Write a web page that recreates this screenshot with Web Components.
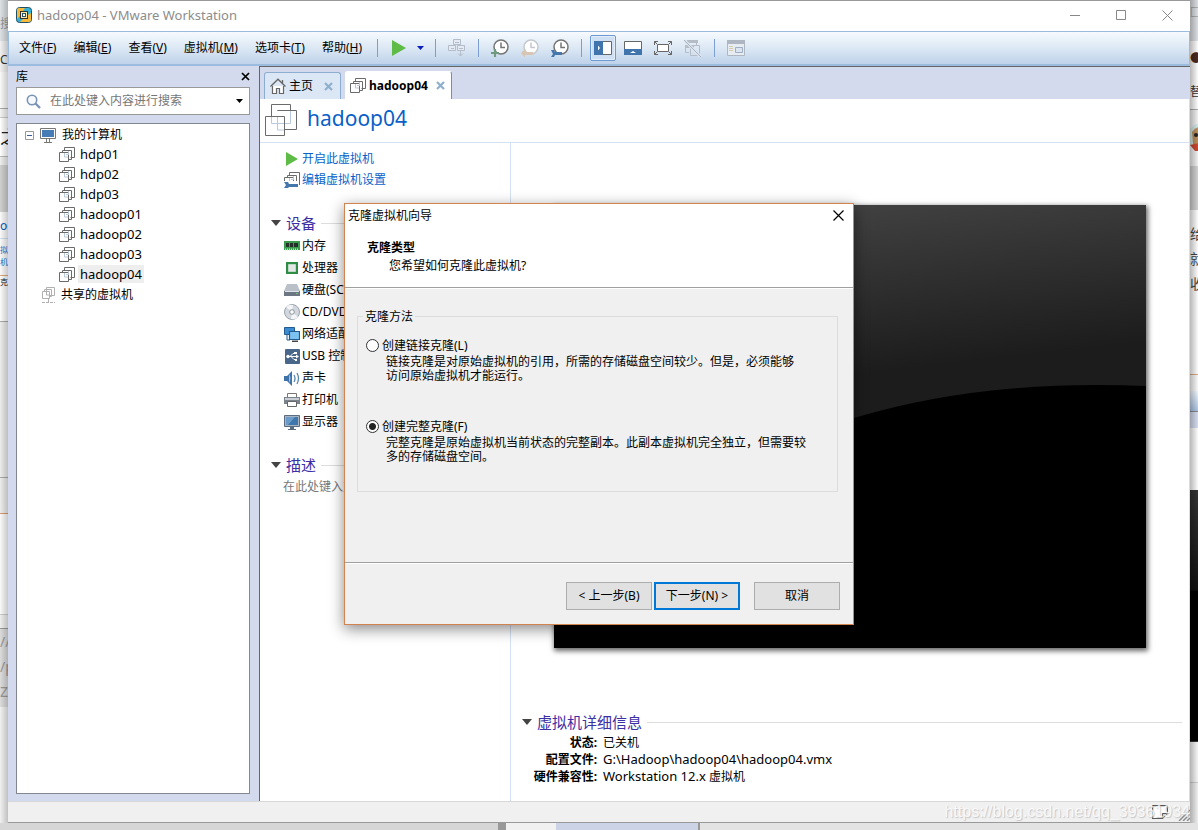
<!DOCTYPE html>
<html lang="zh-CN">
<head>
<meta charset="utf-8">
<title>hadoop04 - VMware Workstation</title>
<style>
html,body{margin:0;height:100%}
body{font:12px/20px "Noto Sans","Noto Sans CJK SC",sans-serif;color:#000;overflow:hidden}
</style>
</head>
<body>
<desk-top>
  <desk-edge slot="left" class="l">
    <desk-block style="--h:41px;--b:#dde1e4;--c:#999;--p:14px">搜</desk-block>
    <desk-block style="--h:31px;--b:#f1f1f1;--c:#333;--p:9px">CS</desk-block>
    <desk-block style="--h:37px;--b:#fafafa;--e:#aaa"></desk-block>
    <desk-block style="--h:9px;--b:#f4f4f4;--e:#ccc"></desk-block>
    <desk-block style="--h:39px;--b:#fff;--c:#222;--e:#bbb;--p:9px;--s:18px">之</desk-block>
    <desk-block style="--h:8px;--b:#eee"></desk-block>
    <desk-block style="--h:47px;--b:#d0d0d0"></desk-block>
    <desk-block style="--h:27px;--b:#fafafa;--c:#0a58c4;--e:#cfe0f0;--p:4px">oc</desk-block>
    <desk-block style="--h:37px;--b:#fafafa;--c:#2a74cc;--e:#e0a878;--l:12px;--s:8px;--p:5px">拟机<br>机设</desk-block>
    <desk-block style="--h:46px;--b:#fcfcfc;--c:#222;--e:#aaa;--s:8px;--l:12px">克隆</desk-block>
    <desk-block style="--h:156px;--b:#ededed;--e:#aaa"></desk-block>
    <desk-block style="--h:36px;--b:#ededed;--e:#d99a6c"></desk-block>
    <desk-block style="--h:101px;--b:#fafafa;--e:#ccc"></desk-block>
    <desk-block style="--h:14px;--b:#eee;--e:#999"></desk-block>
    <desk-block style="--h:78px;--b:#dcdcdc;--c:#999;--l:25px;--s:14px">//<br>/p<br>Z</desk-block>
    <desk-block class="fill" style="--b:#f1f1f1"></desk-block>
  </desk-edge>
  <vm-window></vm-window>
  <desk-edge slot="right" class="r">
    <desk-block style="--h:41px;--b:#dadde1;--c:#888;--p:3px">□</desk-block>
    <desk-block style="--h:41px;--b:#fafafa;--c:#4a2a22;--p:8px">●</desk-block>
    <desk-block style="--h:28px;--b:#fafafa;--c:#333;--e:#aaa">替.</desk-block>
    <desk-block style="--h:56px;--b:#eee;--p:12px"><vm-icon name="dog"></vm-icon></desk-block>
    <desk-block style="--h:44px;--b:#cfcfcf"></desk-block>
    <desk-block style="--h:165px;--b:#fafafa;--c:#444;--p:11px;--l:25px;--s:14px;--e:#dba67c">给<br>就<br>收</desk-block>
    <desk-block style="--h:16px;--b:#f7f7f7"></desk-block>
    <desk-block style="--h:21px;--b:linear-gradient(#eef4fb,#a9c2e2);--e:#888"></desk-block>
    <desk-block style="--h:16px;--b:#d4daee"></desk-block>
    <desk-block style="--h:62px;--b:#fafafa"></desk-block>
    <desk-block style="--h:252px;--b:linear-gradient(#333,#111 100px,#000 101px)"></desk-block>
    <desk-block style="--h:41px;--b:#f4f4f4;--e:#ccc"></desk-block>
    <desk-block class="fill" style="--b:#eee"></desk-block>
  </desk-edge>
</desk-top>

<script>
/* Icon set: name -> [width, height, markup] */
const VM = () => `<g fill="none" stroke="#6b6b6b"><path fill="#fff" d="M5.500 .5h10v10h-10z"/><path fill="#fff" d="M3.500 3.500h8v8h-8z" stroke="none"/><path d="M.5 5.500h9v9h-9z" fill="#fff"/><path d="M3.500 5V3.500h9v9H10"/><path stroke="#b9c8dd" d="M5.500 6v4H9M7 7.500h3M9.500 4v3"/></g>`;
const CLOCK = c => `<circle cx="11" cy="8" r="7" fill="#fff" stroke="${c}" stroke-width="1.500"/><path d="M11 3.500V8.500h4" fill="none" stroke="${c}" stroke-width="1.500"/>`;
const ICONS = {
  app:[16,16,`<rect x=".5" y=".5" width="15" height="15" rx="3" fill="#35b1d8" stroke="#1f4f63"/><path d="M3 1h6L7 4H4v5l-3 3V3q0-2 2-2zM15 6v7q0 2-2 2H4l3-3h5V8z" fill="#f6b93a"/><rect x="4.500" y="4.500" width="7" height="7" fill="#ffe9a3" stroke="#333"/><rect x="6.500" y="6.500" width="3" height="3" fill="#fff" stroke="#26536a"/>`],
  min:[11,11,`<path d="M0 5.500h10" stroke="#888"/>`],
  max:[11,11,`<path d="M.5 .5h9v9h-9z" fill="none" stroke="#888"/>`],
  close:[11,11,`<path d="M.5 .5l10 10M10.500 .5l-10 10" stroke="#888"/>`],
  dclose:[11,11,`<path d="M.5 .5l10 10M10.500 .5l-10 10" stroke="#000" stroke-width="1.200"/>`],
  pclose:[9,9,`<path d="M1 1l7 7M8 1l-7 7" stroke="#000" stroke-width="1.700"/>`],
  tclose:[9,9,`<path d="M1 1l7 7M8 1l-7 7" stroke="#8fb0cd" stroke-width="2.200"/>`],
  play:[14,16,`<path d="M0 0l14 8-14 8z" fill="#5dbb46"/>`],
  run:[12,14,`<path d="M0 0l12 7-12 7z" fill="#5dbb46"/>`],
  caret:[7,4,`<path d="M0 0h7L3.500 4z" fill="#0c1fbc"/>`],
  drop:[7,4,`<path d="M0 0h7L3.500 4z" fill="#000"/>`],
  tri:[10,6,`<path d="M0 0h10L5 6z" fill="#444"/>`],
  send:[18,18,`<g fill="#e4ebf4" stroke="#b3bcc8"><path d="M5.500 .5h7v5h-7zM.5 6.500h7v5h-7zM9.500 6.500h7v5h-7zM7 3.500h4M3 9.500h3M11 9.500h4"/><path fill="none" d="M12.500 11v6M10 14.500l2.500 2.500 2.500-2.500"/></g>`],
  snap:[20,18,CLOCK('#747474')+`<path d="M5 10v8M1 14h8" stroke="#719b7d" stroke-width="2.200"/>`],
  revert:[20,18,CLOCK('#c3c8ce')+`<path d="M1 14l4-4v3h8v3H5v3z" fill="#d8c5b4"/>`],
  manage:[20,18,CLOCK('#747474')+`<path d="M1 11h3l1 2h7v3H5l-1 2H1l2-3z" fill="#4577ac"/>`],
  side:[18,14,`<path fill="#fff" stroke="#666" d="M.5 .5h17v13H.5z"/><path fill="#3f74ac" d="M0 0h9v14H0z"/><path d="M4 4.500L6 7 4 9.500z" fill="#fff"/>`],
  thumb:[18,14,`<path fill="#fff" stroke="#666" d="M.5 .5h17v13H.5z"/><path fill="#3f74ac" d="M0 8h18v6H0z"/><path d="M6 12l3-2 3 2z" fill="#fff"/>`],
  full:[18,14,`<path fill="#fff" stroke="#666" d="M3.500 3.500h11v7h-11z"/><path fill="none" stroke="#666" d="M.5 4V.5H4M.5 .5L3 3M14 .5h3.500V4M17.500 .5L15 3M.5 10v3.500H4M.5 13.500L3 11M14 13.500h3.500V10M17.500 13.500L15 11"/>`],
  unity:[18,17,`<path fill="#b5bcc6" d="M3 0h11v3H3zM1 5h9v3H1z"/><g fill="none" stroke="#b5bcc6"><path d="M12.500 3v3M1.500 8v4.500H5M6.500 5.500h9v10h-9z"/></g><path d="M0 0l17 17" stroke="#dbe5f1" stroke-width="3"/><path d="M0 0l17 17" stroke="#a9b1bc"/>`],
  console:[18,16,`<path fill="#e7ecf2" stroke="#aeb6c1" d="M.5 .5h17v15H.5z"/><path fill="#aeb6c1" d="M0 0h18v4H0z"/><path fill="#dce5ef" stroke="#9dafc4" d="M8.500 7.500h7v5h-7z"/><path stroke="#d5ccaa" d="M2 6.500h4M2 8.500h4M2 10.500h4"/>`],
  search:[15,15,`<circle cx="6" cy="6" r="4.700" fill="#f6fafe" stroke="#7892b8" stroke-width="1.600"/><path d="M9.500 9.500l4.500 4.500" stroke="#7892b8" stroke-width="2.300"/>`],
  minus:[9,9,`<path fill="#fff" stroke="#999" d="M.5 .5h8v8h-8z"/><path stroke="#3a5c9a" d="M2 4.500h5"/>`],
  pc:[16,15,`<path fill="#fff" stroke="#777" d="M.5 .5h15v10H.5z"/><path fill="#477db7" d="M2 2h12v7H2z"/><path d="M6.500 11v3M9.500 11v3M4 14.500h8" stroke="#777"/>`],
  vm:[16,16,VM()],
  shared:[13,17,`<g fill="#fff" stroke="#b0b0b0"><path d="M4.500 .5h8v8h-8z"/><path d="M.5 4.500h7v7h-7z"/><path fill="none" d="M2.500 4V2.500h7v7H8M4.500 5v3H8M6.500 12v3"/><path stroke-dasharray="3 1" d="M0 15.500h13"/></g>`],
  vmbig:[32,32,`<g fill="#fff" stroke="#6b6b6b"><path d="M6.500 .5h19v19h-19z"/><path d="M12.500 6.500h19v19h-19z"/><path stroke="none" d="M12 7h13v12H12z"/><path d="M.5 12.500h19v19H.5z"/><path fill="none" stroke="#b9c8dd" d="M25.500 7v12.500H20M6.500 13v6.500H12M12.500 13v13H19M12.500 19.500H19"/></g>`],
  edit:[16,16,VM()+`<path fill="#fff" d="M0 9h16v7H0z"/><path fill="#4577ac" d="M0 10h4l1 2h9v3H5l-1 1H0l2-3z"/><path d="M15.500 7v6" stroke="#6b6b6b" fill="none"/>`],
  home:[16,16,`<path fill="#fff" stroke="#666" stroke-width="1.200" d="M2.500 8v7.500h4v-5h3v5h4V8"/><path fill="none" stroke="#666" stroke-width="1.300" d="M.5 8.500L8 1.200l7.500 7.300M12.500 5V2"/>`],
  mem:[16,10,`<path fill="#3a9a4d" d="M0 0h16v9H0z"/><path fill="#25302a" d="M2 2h3v4H2zM6 2h3v4H6zM10 2h4v4h-4z"/><path stroke="#e8dc8a" stroke-dasharray="1 1" d="M1 8.500h14" stroke-width="2"/>`],
  cpu:[12,12,`<path fill="#2f8d46" d="M0 0h12v12H0z"/><path fill="#e4e7e6" stroke="#bfd9c5" d="M2.500 2.500h7v7h-7z"/>`],
  disk:[16,12,`<path fill="#b9c0c8" d="M3 0h10l3 7H0z"/><path fill="#6c7783" d="M0 7h16v5H0z"/><path stroke="#dfe5ea" d="M1 7.500h14"/><path fill="#6fc57a" d="M12 9h2v1h-2z"/>`],
  cd:[16,16,`<circle cx="8" cy="8" r="7.500" fill="#d2d7dd" stroke="#9aa3ad"/><path fill="#f3f5f7" d="M8 8L2 3q3-3 7-2zM8 8l6 5q-3 3-7 2z"/><circle cx="8" cy="8" r="2.300" fill="#fff" stroke="#8c949e"/>`],
  net:[16,15,`<path fill="#3b8bd0" stroke="#225b91" d="M.5 .5h10v7H.5z"/><path fill="none" stroke="#225b91" d="M3 8v5h3"/><path fill="#7dc3f2" stroke="#225b91" stroke-width="1.200" d="M5.500 4.500h10v8h-10z"/><path stroke="#444" stroke-width="1.500" d="M8 14.300h6"/>`],
  usb:[15,15,`<rect width="15" height="15" rx="1" fill="#49678b"/><path fill="none" stroke="#fff" d="M2 7.500h10M5 7.500l3-3h2M6 7.500l3 3h2"/><circle cx="3" cy="7.500" r="1.700" fill="#fff"/><path fill="#fff" d="M9 3h3v2H9zM10 10h2v2h-2zM11 5.500l3 2-3 2z"/>`],
  snd:[16,15,`<path fill="#3e72a8" d="M0 5h3l5-5v15l-5-5H0z"/><path fill="#9cc4e8" d="M5 3q3 4 0 9z"/><path fill="none" stroke="#5b86b2" stroke-width="1.300" d="M10 4q2 3.500 0 7M13 2q3 5.500 0 11"/>`],
  prn:[16,14,`<path fill="#fff" stroke="#777" d="M3.500 .5h9v5h-9z"/><path fill="#7b838c" d="M0 4h16v7H0z"/><path fill="#c9ced4" d="M1 5h14v2H1z"/><path fill="#fff" stroke="#666" d="M3.500 8.500h9v5h-9z"/>`],
  disp:[16,15,`<path fill="#a8b4c1" stroke="#5b6c80" d="M.5 .5h15v11H.5z"/><path fill="#3f76ac" d="M2 2h12v8H2z"/><path fill="#6b9bc9" d="M2 2h9L4 10H2z"/><path fill="#5b6c80" d="M6 12h4v2H6zM4 14h8v1H4z"/>`],
  note:[16,14,`<path fill="#fff" stroke="#555" stroke-width="1.200" d="M.6 .6h14.800v7.900l-5 5H.6z"/><path fill="#ccc" stroke="#555" d="M10.400 13.500v-5h5"/>`],
  grip:[12,12,`<path d="M1 12L12 1M5 12l7-7M9 12l3-3" stroke="#8b8b8b" stroke-width="1.500"/>`],
  dog:[20,30,`<circle cx="12" cy="15" r="14" fill="#cfe6e4"/><path fill="#b98d5c" d="M2 10q5-7 12-4v16H3z"/><circle cx="6" cy="13" r="2" fill="#222"/><path fill="#c9472f" d="M0 23q8-3 16 0v6H5z"/>`]
};

function define(name, markup, after) {
  const t = document.createElement('template');
  t.innerHTML = markup;
  customElements.define(name, class extends HTMLElement {
    constructor() { super(); this.attachShadow({mode: 'open'}).append(t.content.cloneNode(true)); }
    connectedCallback() { if (after) after(this, this.shadowRoot); }
  });
}

customElements.define('vm-icon', class extends HTMLElement {
  constructor() { super(); this.attachShadow({mode: 'open'}); }
  connectedCallback() {
    const [w, h, m] = ICONS[this.getAttribute('name')];
    this.shadowRoot.innerHTML = `<style>:host{display:inline-flex;flex:none}svg{display:block}</style><svg width="${w}" height="${h}" viewBox="0 0 ${w} ${h}" aria-hidden="true">${m}</svg>`;
  }
});

function icon(name) {
  const i = document.createElement('vm-icon');
  i.setAttribute('name', name);
  return i;
}

define('desk-block', `<style>
:host{display:block;flex:none;box-sizing:border-box;height:var(--h);overflow:hidden;white-space:nowrap;background:var(--b);color:var(--c);border-bottom:1px solid var(--e,transparent);padding-top:var(--p,0);font-size:var(--s,12px);line-height:var(--l,20px)}
:host(.fill){flex:1 0 0;height:auto}</style><slot></slot>`);

define('desk-edge', `<style>
:host{display:flex;flex-direction:column;min-width:0;overflow:hidden;position:relative}
:host::after{content:"";position:absolute;inset:0}
:host(.l)::after{background:linear-gradient(90deg,transparent,#0003)}
:host(.r)::after{background:linear-gradient(270deg,transparent,#0004)}</style><slot></slot>`);

define('desk-top', `<style>
:host{display:grid;grid-template:1fr 7px/8px 1fr 8px;height:100vh}
.main{min-width:0;display:grid}
.bottom{grid-column:1/-1;display:flex;background:#d6d6d6}
.bottom i{flex:none;height:7px}
.a{width:498px}.b{width:8px;background:#999}.c{width:50px;background:#f1f1f1}.d{width:142px;background:#ccd3e6;border-right:2px solid #999}.bottom .e{flex:1;background:#e3e3e3}
</style><slot name="left"></slot><div class="main"><slot></slot></div><slot name="right"></slot>
<div class="bottom"><i class="a"></i><i class="b"></i><i class="c"></i><i class="d"></i><i class="e"></i></div>`);

define('title-bar', `<style>
:host{display:flex;align-items:center;height:30px;box-sizing:border-box;padding:0 17px 2px 8px;background:#fff;color:#8c8c8c;font-size:13px}
span{margin-left:5px;flex:1}
button{border:0;background:none;padding:0;display:flex;margin-left:35px}
</style><vm-icon name="app"></vm-icon><span>hadoop04 - VMware Workstation</span>
<button aria-label="最小化"><vm-icon name="min"></vm-icon></button><button aria-label="最大化"><vm-icon name="max"></vm-icon></button><button aria-label="关闭"><vm-icon name="close"></vm-icon></button>`);

define('menu-item', `<style>:host{display:block}button{font:inherit;line-height:20px;border:0;background:none;padding:0;color:#000;white-space:nowrap}</style>
<button><slot></slot>(<u></u>)</button>`, (el, r) => r.querySelector('u').textContent = el.getAttribute('key'));

define('tool-button', `<style>:host{display:flex}
button{display:grid;place-items:center;width:26px;height:26px;box-sizing:border-box;border:1px solid transparent;border-radius:2px;background:none;padding:0}
:host(.on) button{background:#cfe0f5;border-color:#6d9ad2;box-shadow:inset 0 0 0 1px #e4eefb}
:host(.slim) button{width:14px}
</style><button></button>`, (el, r) => {
  const b = r.querySelector('button');
  b.replaceChildren(icon(el.getAttribute('icon')));
  b.setAttribute('aria-label', el.getAttribute('label'));
});

define('tool-bar', `<style>
:host{display:flex;align-items:center;border:1px solid #9cbcdf;border-bottom-width:2px;box-sizing:border-box;height:35px;background:linear-gradient(#f7fafe,#dce8f4 50%,#bfd2ea);padding-left:10px}
.menus{display:flex;gap:17px;margin-right:15px}
i{width:1px;height:18px;background:#7c9fd0;flex:none}
div.g{display:flex;align-items:center;gap:4px;padding:0 8px}
div.p{gap:1px}
</style>
<div class="menus"><menu-item key="F">文件</menu-item><menu-item key="E">编辑</menu-item><menu-item key="V">查看</menu-item><menu-item key="M">虚拟机</menu-item><menu-item key="T">选项卡</menu-item><menu-item key="H">帮助</menu-item></div>
<i></i><div class="g p"><tool-button icon="play" label="开机"></tool-button><tool-button class="slim" icon="caret" label="电源选项"></tool-button></div>
<i></i><div class="g"><tool-button icon="send" label="发送"></tool-button></div>
<i></i><div class="g"><tool-button icon="snap" label="拍摄快照"></tool-button><tool-button icon="revert" label="恢复快照"></tool-button><tool-button icon="manage" label="管理快照"></tool-button></div>
<i></i><div class="g"><tool-button class="on" icon="side" label="显示库"></tool-button><tool-button icon="thumb" label="缩略图"></tool-button><tool-button icon="full" label="全屏"></tool-button><tool-button icon="unity" label="Unity"></tool-button></div>
<i></i><div class="g"><tool-button icon="console" label="控制台"></tool-button></div>`);

define('tree-item', `<style>
:host{display:flex;align-items:center;height:20px;padding-left:42px;gap:3px}
:host(.root){padding-left:8px;gap:4px}:host(.shared){padding-left:25px;gap:4px}
span{padding:0 2px;font-size:13px;line-height:18px;margin-bottom:2px}
:host(.root) span,:host(.shared) span{font-size:12px;margin:0}
:host(.root) vm-icon+vm-icon{margin-left:2px}
:host(.sel) span{background:#eee}
</style><span><slot></slot></span>`, (el, r) => {
  (el.getAttribute('icon') || 'vm').split(' ').forEach(n => r.querySelector('span').before(icon(n)));
});

define('library-pane', `<style>
:host{display:flex;flex-direction:column;background:#d4daee;padding:0 9px 7px 8px;width:251px;box-sizing:border-box}
header{display:flex;justify-content:space-between;align-items:center;height:21px}
button{border:0;background:none;padding:0;display:flex}
.search{display:flex;align-items:center;height:28px;box-sizing:border-box;border:1px solid #999;background:#fff;padding:0 6px 0 9px}
input{flex:1;min-width:0;border:0;padding:0;margin-left:9px;font:inherit;outline:0}
input::placeholder{color:#767676;opacity:1}
.tree{flex:1;margin-top:8px;border:1px solid #828790;background:#fff;padding-top:1px}
</style><header><span>库</span><button aria-label="关闭库"><vm-icon name="pclose"></vm-icon></button></header>
<div class="search"><vm-icon name="search"></vm-icon><input aria-label="搜索" placeholder="在此处键入内容进行搜索"><button aria-label="搜索选项"><vm-icon name="drop"></vm-icon></button></div>
<div class="tree"><tree-item class="root" icon="minus pc">我的计算机</tree-item><tree-item>hdp01</tree-item><tree-item>hdp02</tree-item><tree-item>hdp03</tree-item><tree-item>hadoop01</tree-item><tree-item>hadoop02</tree-item><tree-item>hadoop03</tree-item><tree-item class="sel">hadoop04</tree-item><tree-item class="shared" icon="shared">共享的虚拟机</tree-item></div>`);

define('tab-strip', `<style>
:host{display:flex;align-items:flex-end;gap:4px;height:32px;padding-left:4px;background:#d4daee}
.tab{display:flex;align-items:center;box-sizing:border-box;height:27px;border:1px solid #8cadd0;border-bottom:0;border-radius:3px 3px 0 0;background:#dbe7f5;padding:0 7px 0 5px}
.on{height:28px;background:#fff;border-color:#fff #6d8fb8 #fff #fff;font-weight:bold;padding:0 6px 0 4px}
button{border:0;background:none;padding:0;display:flex;align-items:center;font:inherit;line-height:20px;color:#000;gap:3px}
.x{margin-left:11px}.on .x{margin-left:8px}
</style><div class="tab"><button><vm-icon name="home"></vm-icon>主页</button><button class="x" aria-label="关闭主页"><vm-icon name="tclose"></vm-icon></button></div>
<div class="tab on"><button><vm-icon name="vm"></vm-icon>hadoop04</button><button class="x" aria-label="关闭 hadoop04"><vm-icon name="tclose"></vm-icon></button></div>`);

define('section-head', `<style>
:host{display:flex;align-items:center;gap:5px;color:#3d2fa5;font-size:15px;line-height:22px;margin-bottom:1px}
h2{font:inherit;margin:0}i{flex:1;height:1px;background:#ddd}
</style><vm-icon name="tri"></vm-icon><h2><slot></slot></h2><i></i>`);

define('device-row', `<style>
:host{display:flex;align-items:center;height:22px;white-space:nowrap}
span{width:16px;display:flex;justify-content:center;margin-right:2px;flex:none}a{color:#000;text-decoration:none}
:host(.cmd) a{color:#0a62c9}:host(.cmd){height:21px}
</style><span></span><a href="#"><slot></slot></a>`, (el, r) => r.querySelector('span').replaceChildren(icon(el.getAttribute('icon'))));

define('side-column', `<style>
:host{display:block;width:251px;box-sizing:border-box;border-right:1px solid #d5e1f2;padding:5px 0 0 11px}
.rows{padding-left:13px}
section-head{margin-top:22px}.d{margin-top:21px}
p{margin:0;padding-left:12px;color:#777}
</style><div class="rows"><device-row class="cmd" icon="run">开启此虚拟机</device-row><device-row class="cmd" icon="edit">编辑虚拟机设置</device-row></div>
<section-head>设备</section-head>
<div class="rows"><device-row icon="mem">内存</device-row><device-row icon="cpu">处理器</device-row><device-row icon="disk">硬盘(SCSI)</device-row><device-row icon="cd">CD/DVD (IDE)</device-row><device-row icon="net">网络适配器</device-row><device-row icon="usb">USB 控制器</device-row><device-row icon="snd">声卡</device-row><device-row icon="prn">打印机</device-row><device-row icon="disp">显示器</device-row></div>
<section-head class="d">描述</section-head><p>在此处键入对该虚拟机的描述。</p>`);

define('vm-summary', `<style>
:host{display:flex;flex-direction:column;flex:1;min-width:0;padding:62px 8px 16px 11px}
.screen{margin:0 36px 0 32px;box-shadow:1px 2px 5px 1px #0009}
svg{display:block;width:100%}
section-head{margin-top:auto}
dl{margin:0;display:grid;grid-template-columns:75px 1fr;column-gap:6px;line-height:17px}
dt{font-weight:bold;text-align:right;white-space:nowrap}dd{margin:0}.w{font-size:13px}
</style><div class="screen"><svg viewBox="0 0 592 443" role="img" aria-label="虚拟机屏幕"><defs><linearGradient id="g" x1="0" y1="0" x2=".15" y2="1"><stop offset="0" stop-color="#484848"/><stop offset=".45" stop-color="#1c1c1c"/></linearGradient></defs><path fill="url(#g)" d="M0 0h592v443H0z"/><path d="M0 443V330L300 213Q430 174 592 181V443z"/></svg></div>
<section-head>虚拟机详细信息</section-head>
<dl><dt>状态:</dt><dd>已关机</dd><dt>配置文件:</dt><dd class="w">G:\\Hadoop\\hadoop04\\hadoop04.vmx</dd><dt>硬件兼容性:</dt><dd><span class="w">Workstation 12.x</span> 虚拟机</dd></dl>`);

define('vm-view', `<style>
:host{display:flex;flex-direction:column;min-width:0;background:#fff;border:solid #666;border-width:1px 0 0 1px;box-shadow:inset -1px 0 #ddd}
header{display:flex;align-items:center;gap:10px;height:43px;padding-left:5px;border-bottom:1px solid #d3e1f3;font-size:21px;color:#0a5fc8}
h1{font:inherit;line-height:30px;margin:0 0 5px}
header vm-icon{margin-bottom:2px}
main{display:flex;flex:1}
</style><tab-strip></tab-strip><header><vm-icon name="vmbig"></vm-icon><h1>hadoop04</h1></header>
<main><side-column></side-column><vm-summary></vm-summary></main>`);

define('status-bar', `<style>
:host{display:flex;justify-content:flex-end;align-items:center;height:21px;background:#f0f0f0;border-top:1px solid #d8d8d8;position:relative;box-sizing:border-box}
vm-icon{margin-right:10px}vm-icon+vm-icon{margin:6px 0 0}
span{position:absolute;right:0;top:0;font:16px/20px "Liberation Sans",sans-serif;color:#fbfbfb;text-shadow:1px 1px 1px #bbb;opacity:.8}
</style><vm-icon name="note"></vm-icon><vm-icon name="grip"></vm-icon><span>https://blog.csdn.net/qq_39361934</span>`);

define('clone-option', `<style>
:host{display:block;height:81px}
label{display:flex;align-items:center;height:18px;white-space:nowrap}
input{appearance:none;width:13px;height:13px;border:1px solid #333;border-radius:50%;background:#fff;margin:0 3px 0 0;flex:none}
input:checked{background:radial-gradient(#222 0 3px,#fff 4px)}
p{margin:0 0 0 20px;line-height:14px}
</style><label><input type="radio"><slot name="label"></slot></label><p><slot></slot></p>`,
 (el, r) => r.querySelector('input').checked = el.hasAttribute('checked'));

define('dialog-button', `<style>
:host{display:block}
button{width:86px;height:28px;box-sizing:border-box;background:#e1e1e1;border:1px solid #adadad;font:inherit;padding:0;color:#000}
:host(.primary) button{border:2px solid #0078d7}
</style><button><slot></slot></button>`);

define('clone-wizard', `<style>
:host{display:flex;flex-direction:column;width:510px;height:422px;box-sizing:border-box;border:1px solid #d2834f;background:#f0f0f0;box-shadow:0 4px 14px #0007}
header{background:#fff;height:83px;border-bottom:1px solid #a0a0a0;box-shadow:0 1px #fff;flex:none}
.t{display:flex;justify-content:space-between;align-items:center;height:24px;padding:0 9px 0 3px}
.t button{border:0;background:none;padding:0;display:flex}
h3{margin:11px 0 0 22px;font-size:12px;line-height:18px}
header p{margin:0 0 0 44px;line-height:17px}
fieldset{box-sizing:border-box;margin:19px 15px 0 12px;border:1px solid #dcdcdc;padding:10px 7px 0 8px;height:185px;min-width:0}
legend{padding:0 2px;margin-left:-3px;line-height:20px}
footer{display:flex;margin-top:auto;padding:19px 13px 14px;justify-content:flex-end;gap:2px;border-top:1px solid #a0a0a0;box-shadow:inset 0 1px #fff}
.c{margin-left:12px}
</style><header><div class="t"><span>克隆虚拟机向导</span><button aria-label="关闭"><vm-icon name="dclose"></vm-icon></button></div><h3>克隆类型</h3><p>您希望如何克隆此虚拟机?</p></header>
<fieldset><legend>克隆方法</legend>
<clone-option><span slot="label">创建链接克隆(L)</span>链接克隆是对原始虚拟机的引用，所需的存储磁盘空间较少。但是，必须能够<br>访问原始虚拟机才能运行。</clone-option>
<clone-option checked><span slot="label">创建完整克隆(F)</span>完整克隆是原始虚拟机当前状态的完整副本。此副本虚拟机完全独立，但需要较<br>多的存储磁盘空间。</clone-option></fieldset>
<footer><dialog-button>&lt; 上一步(B)</dialog-button><dialog-button class="primary">下一步(N) &gt;</dialog-button><dialog-button class="c">取消</dialog-button></footer>`);

define('vm-window', `<style>
:host{display:grid;grid-template-rows:auto auto 1fr auto;position:relative;border-top:1px solid #999;border-bottom:1px solid #999;box-sizing:border-box;min-width:0;background:#fff}
.body{display:grid;grid-template-columns:auto 1fr;min-height:0}
.modal{position:absolute;inset:0;display:grid;place-items:center;padding-top:4px}
</style><title-bar></title-bar><tool-bar></tool-bar><div class="body"><library-pane></library-pane><vm-view></vm-view></div><status-bar></status-bar>
<div class="modal"><clone-wizard role="dialog" aria-label="克隆虚拟机向导"></clone-wizard></div>`);
</script>
</body>
</html>
